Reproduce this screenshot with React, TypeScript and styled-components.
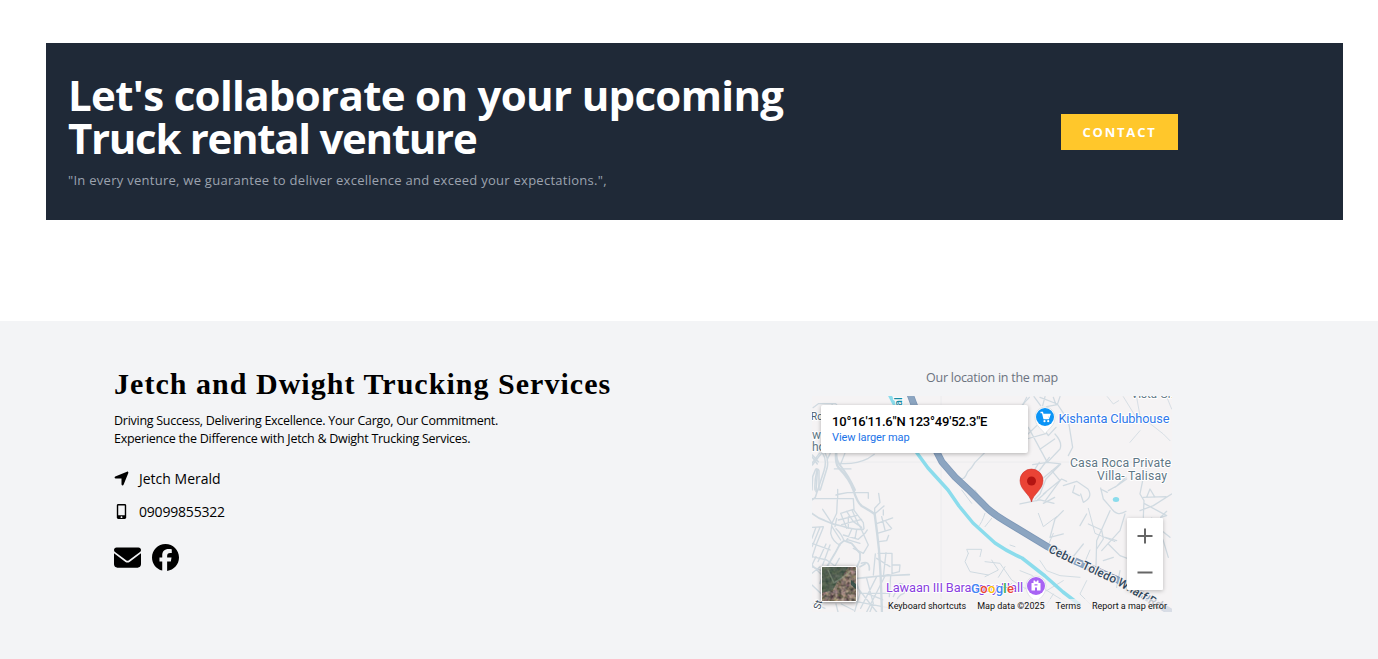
import React from "react";
import styled, { createGlobalStyle } from "styled-components";
import { FaEnvelope, FaFacebook, FaLocationArrow } from "react-icons/fa6";
import { FaMobileAlt } from "react-icons/fa";

const GlobalStyle = createGlobalStyle`
  * { box-sizing: border-box; }
  body {
    margin: 0;
    background: #fff;
    font-family: "Open Sans", "Noto Sans", sans-serif;
  }
  h2, p { margin: 0; font-weight: 400; }
`;

const Page = styled.div`
  width: 1378px;
  height: 659px;
  padding-top: 43px;
  overflow: hidden;
`;

const Banner = styled.section`
  display: flex;
  height: 177px;
  margin: 0 35px 101px 46px;
  padding: 30px 165px 0 22px;
  justify-content: space-between;
  background: #1f2937;
`;

const BannerTitle = styled.h2`
  color: #fff;
  font-size: 42px;
  line-height: 43px;
  font-weight: 700;
  white-space: nowrap;
`;

const TitleLine = styled.span<{ $spacing: number }>`
  display: block;
  letter-spacing: ${(p) => p.$spacing}px;
`;

const BannerText = styled.p`
  margin-top: 11px;
  color: #9ca3af;
  font-size: 13px;
  line-height: 20px;
  letter-spacing: 0.27px;
  white-space: nowrap;
`;

const ContactButton = styled.button`
  width: 117px;
  height: 36px;
  margin-top: 41px;
  padding: 0;
  border: 0;
  background: #ffc72b;
  color: #fff;
  font: 700 13px/36px "Open Sans", sans-serif;
  letter-spacing: 1.8px;
`;

const Footer = styled.footer`
  display: flex;
  height: 338px;
  padding: 46px 206px 0 114px;
  justify-content: space-between;
  background: #f3f4f6;
`;

const Company = styled.div`
  display: flex;
  flex-direction: column;
`;

const CompanyName = styled.h2`
  font: 700 30px/34px "Liberation Serif", serif;
  letter-spacing: 1.03px;
  white-space: nowrap;
`;

const Tagline = styled.p`
  margin-top: 11px;
  font-size: 12.5px;
  line-height: 18px;
  letter-spacing: -0.27px;
  white-space: nowrap;
`;

const ContactList = styled.div`
  display: flex;
  flex-direction: column;
  gap: 13px;
  margin-top: 20px;
`;

const ContactRow = styled.div`
  display: flex;
  align-items: center;
  height: 20px;
  font-size: 14px;
`;

const IconSlot = styled.span`
  display: flex;
  width: 14px;
  margin-right: 11px;
  justify-content: center;

  svg { flex: none; }
`;

const ContactLabel = styled.span<{ $spacing: number }>`
  letter-spacing: ${(p) => p.$spacing}px;
`;

const Socials = styled.div`
  display: flex;
  gap: 11px;
  margin-top: 23px;
`;

const Location = styled.div`
  display: flex;
  flex-direction: column;
  width: 360px;
  align-items: center;
`;

const LocationTitle = styled.p`
  height: 29px;
  color: #6b7280;
  font-size: 12.5px;
  line-height: 21px;
  letter-spacing: -0.27px;
`;

const MapFrame = styled.div`
  position: relative;
  width: 360px;
  height: 216px;
  overflow: hidden;
  background: #f5f3f4;
  font-family: Roboto, sans-serif;
`;

const MapDrawing = styled.svg`
  display: block;
`;

const InfoCard = styled.div`
  position: absolute;
  left: 9px;
  top: 9px;
  width: 207px;
  height: 48px;
  padding: 9px 11px;
  border-radius: 2px;
  background: #fff;
  box-shadow: 0 1px 4px rgba(0, 0, 0, 0.28);
  white-space: nowrap;
`;

const Coordinates = styled.div`
  color: #000;
  font-size: 13px;
  line-height: 15px;
  font-weight: 500;
  letter-spacing: -0.2px;
`;

const MapLink = styled.div`
  color: #1a73e8;
  font-size: 11px;
  line-height: 18px;
  letter-spacing: -0.1px;
`;

const ZoomControl = styled.div`
  position: absolute;
  right: 9px;
  top: 122px;
  width: 36px;
  height: 72px;
  border-radius: 1px;
  background: #fff;
  box-shadow: 0 1px 4px rgba(0, 0, 0, 0.25);
`;

const Satellite = styled.div`
  position: absolute;
  left: 9px;
  top: 170px;
  width: 36px;
  height: 36px;
  border: 1px solid #fff;
  border-radius: 2px;
  box-shadow: 0 1px 4px rgba(0, 0, 0, 0.5);
  overflow: hidden;
`;

const Attribution = styled.div`
  position: absolute;
  right: 0;
  bottom: 0;
  display: flex;
  height: 13px;
  padding: 0 5px;
  gap: 11px;
  background: rgba(245, 243, 244, 0.72);
  color: #111;
  font-size: 9px;
  line-height: 15px;
  white-space: nowrap;
`;

const Roads = () => (
  <g fill="none" stroke="#d0dae1" strokeLinejoin="round" strokeLinecap="round">
    <path d="M0 66H360M129 0V216" stroke="#ececee" strokeWidth="1" />
    <g transform="translate(-7 -31) scale(.3333)" strokeWidth="3.8">
      <path d="M24 128L40 116H92L102 128M80 116L86 128" />
      <path d="M60 264Q72 285 66 310L46 375M30 375Q28 350 36 314Q40 310 42 318V375M22 300L50 264M22 270L40 290M66 285L76 264" strokeWidth="4.5" />
      <path d="M94 264Q94 285 103 298Q130 330 150 375" strokeWidth="6" />
      <path d="M100 295Q150 300 190 280L208 268M88 312H138M106 300L120 264" />
      <path d="M470 340Q478 345 488 320Q500 310 510 292L538 264" />
    </g>
    <g transform="translate(-2 54) scale(.3333)" strokeWidth="4">
      <path d="M38 10Q52 30 42 62L16 142L6 150M6 120L8 80L16 60Q22 50 22 66L18 125M6 40L28 10M6 20L22 42" strokeWidth="4.500" />
      <path d="M78 10Q76 40 85 52Q120 88 130 120Q142 158 155 168Q180 182 194 192Q202 250 207 300L212 378L216 486" strokeWidth="7" />
      <path d="M6 190Q25 205 45 212Q70 224 95 228Q130 240 160 238" strokeWidth="5" />
      <path d="M6 146H130L132 178M78 135L90 132L112 128H175V145M83 118V145M38 178L66 220L62 250Q68 275 90 285M82 150L80 190L66 220" />
      <path d="M92 190L130 178L160 218L162 236M92 190L110 235M110 184L130 215M126 180L146 225M85 210L142 196M95 224L155 208M130 215L155 232M115 200V235M80 205L75 230" />
      <path d="M78 236Q95 252 102 272M66 230L92 270M100 255L145 268L165 250L172 240M148 225L175 285L160 310L130 295M125 238L110 272M140 240L135 265M110 268L150 280" />
      <path d="M102 272L90 282L75 310L45 360L30 400M102 272L125 280L150 310V330L130 375L135 390" strokeWidth="5.500" />
      <path d="M6 232L40 230M18 232L6 265M30 232L6 290M40 232L18 286L6 322M6 280L60 300M60 285L38 345M48 282L24 335M6 320L50 330L75 348L88 325M6 350L35 362M18 320L6 345" />
      <path d="M194 192V175L210 158L206 130M194 192L222 168M198 222L248 204M202 250L242 238M215 200L225 240M220 195V180M207 275L230 272L236 256M228 215L245 235" />
      <path d="M204 310H246V372M228 308L220 380M196 312L190 375M246 345H270L268 365L210 380M200 325L240 350" />
      <path d="M136 386L210 378L298 374M154 340Q180 330 178 360M150 350L165 342" strokeWidth="5" />
      <path d="M136 386L150 430L134 484M170 385L190 460L180 485M152 430H240M200 380L152 475M225 378L170 486M136 405L200 486M170 430L220 450M242 378L238 440M140 455L245 475M6 345L35 374M6 370L30 350M6 405L32 430M10 460L45 475M78 462L84 486M94 462L130 480M250 440L270 400Q290 400 282 430Q260 435 255 470" />
    </g>
    <g transform="translate(208 -2) scale(.3333)" strokeWidth="3.8">
      <path d="M20 10L0 50M42 8L62 35M60 10L112 30L145 80L158 160L145 185M75 8L68 35M100 10L108 32M120 8L112 32L80 38M108 100L85 125L62 90M25 100L82 205M82 205L120 165Q128 145 105 120M20 135L80 118M60 166L104 135M38 212L82 205L122 210L78 255L60 300L45 315M35 240L58 205M60 260L120 210M70 300L125 255L140 262M50 320L78 295" />
      <path d="M0 40L28 10M22 60L0 70M50 95L24 120M50 240L88 190M76 320L120 260L95 230M70 328L104 310M0 330L60 318L102 328" />
      <path d="M262 8L280 30L296 20M310 8L345 65L370 90M350 10L360 65L430 120L450 140M330 145L360 110M440 8L455 45" strokeWidth="2.500" />
      <path d="M130 275L170 262L204 285Q220 310 190 325L182 300M164 275L158 295L178 305" />
      <path d="M242 282L250 315L272 340Q290 370 318 352M265 290L290 276L318 250M242 285L262 295M285 280L320 255M370 250L360 300L372 320L370 370M370 310L438 308M372 328L440 365L422 370L440 352M360 350L400 335L455 300M380 310L390 285L405 310" />
      <path d="M130 350L105 375L90 430L130 420M270 350L230 440L228 520M205 390L245 408L250 435L230 465M315 360L300 410L245 470M265 450L300 485L340 500M250 500L280 490M180 395L200 360M150 500L190 450M395 372L430 440L445 490M400 390L450 430M300 530L290 580M195 520L250 550M255 430L290 440" />
      <path d="M60 500L80 530L120 545L180 550M0 530L38 545L65 580L130 620L170 640M40 550L15 585M80 590L130 560M100 600L75 640M200 560L180 600L220 640" strokeWidth="2.800" />
    </g>
    <g transform="translate(173 94) scale(.3333)" strokeWidth="3">
      <path d="M0 215L45 220L80 270L120 295M20 210L40 240L0 260M60 230L40 262M75 165L90 170M80 280L55 310M0 70Q-10 100 -20 110M20 85L0 110M-70 0L-40 40M-30 0L10 60" />
      <path d="M-50 190L-55 178H-10L-15 200M-50 190L-60 215L-45 245L10 255" />
      <path d="M160 70L175 110L215 80M190 165L205 130M310 55L330 130L390 155M240 200L300 215L315 180" />
    </g>
  </g>
);

const MapLabels = () => (
  <g fontFamily="Roboto, sans-serif" stroke="#fff" strokeWidth="2" strokeLinejoin="round" paintOrder="stroke">
    <text x="246.500" y="27" fontSize="12.8" fill="#2f78ea" textLength="111">Kishanta Clubhouse</text>
    <g fontSize="12.300" fill="#5f7886">
      <text x="258" y="71" textLength="101">Casa Roca Private</text>
      <text x="285" y="84" textLength="70">Villa- Talisay</text>
      <text x="319" y="2" fontSize="11.500">Vista Gr.</text>
      <text x="0" y="43" fontSize="12">w</text>
      <text x="0" y="55" fontSize="12">ho</text>
    </g>
    <text x="-1" y="24" fontSize="10" fill="#4b6070">Ro</text>
    <text transform="translate(90 10) rotate(-90)" fontSize="11" fill="#168ba5" fontWeight="500">al</text>
    <text transform="translate(8 214) rotate(-75)" fontSize="10" fill="#3f5060">St.</text>
    <text x="74" y="196" fontSize="12.8" fill="#8a3fe0" textLength="137">Lawaan III Barangay Hall</text>
  </g>
);

const LocationMap = () => (
  <MapDrawing width="360" height="216" viewBox="0 0 360 216">
    <defs>
      <path id="wharf" d="M237 153L265 167L306 186L354 214" />
    </defs>
    <Roads />
    <ellipse cx="304" cy="103.500" rx="3.200" ry="2.500" fill="#8bdcec" />
    <g fill="none" strokeLinejoin="round">
      <path d="M77 -2Q87 16 93 35L105 57L116 72L136 94L147 110L161 127L183 147Q196 156 210 162L233 180L251 196L268 209" stroke="#8bdcec" strokeWidth="3.500" />
      <path d="M98 -2Q104 15 114 36Q123 52 130 66L143 81L158 95L171 108Q178 116 193 125L236 151L263 165L306 184L362 218" stroke="#7d97b7" strokeWidth="7" />
      <path d="M98 -2Q104 15 114 36Q123 52 130 66L143 81L158 95L171 108Q178 116 193 125L236 151L263 165L306 184L362 218" stroke="#8ca5c1" strokeWidth="5.500" />
    </g>
    <text fontFamily="Roboto, sans-serif" fontSize="12" fill="#344a60" stroke="#f5f3f4" strokeWidth="2.500" paintOrder="stroke" fontWeight="500" dy="3">
      <textPath href="#wharf">Cebu - Toledo Wharf Rd</textPath>
    </text>
    <MapLabels />
    <g>
      <path d="M233 38C230 33 223 30 223 21A10 10 0 0 1 243 21C243 30 236 33 233 38Z" fill="#fff" stroke="#c9ced3" strokeWidth=".5" />
      <circle cx="233" cy="21" r="9" fill="#0b94f6" />
      <path d="M228.500 16.500H230.500L232 22.700H236.500L238 18.500H231" fill="none" stroke="#fff" strokeWidth="1.300" />
      <path d="M231 18.500H237.500L236 22.500H232Z" fill="#fff" />
      <circle cx="232.500" cy="25.200" r="1.100" fill="#fff" /><circle cx="236.200" cy="25.200" r="1.100" fill="#fff" />
    </g>
    <g>
      <path d="M224 207C222 203 214 200 214 190A10 10 0 0 1 234 190C234 200 226 203 224 207Z" fill="#fff" stroke="#c9ced3" strokeWidth=".5" />
      <circle cx="224" cy="190" r="9" fill="#a863f4" />
      <path fillRule="evenodd" d="M219.500 187H221.500V184.500H223V185.500H225V184.500H226.500V187H228.500V194.500H219.500ZM223 194.500H225V191.500H223ZM222.500 188.300H225.500V189.500H222.500Z" fill="#fff" />
    </g>
    <path d="M219.500 106C218 98 208 94 208 84.500A11.500 11.500 0 0 1 231 84.500C231 94 221 98 219.500 106Z" fill="#ea4335" stroke="#c5221f" strokeWidth=".5" />
    <circle cx="219.500" cy="85" r="4.500" fill="#b31412" />
    <text x="159" y="197" fontFamily="Roboto, sans-serif" fontSize="13" fontWeight="500" stroke="#fff" strokeWidth="1.500" paintOrder="stroke" textLength="43">
      <tspan fill="#4285f4">G</tspan><tspan fill="#ea4335">o</tspan><tspan fill="#fbbc04">o</tspan><tspan fill="#4285f4">g</tspan><tspan fill="#34a853">l</tspan><tspan fill="#ea4335">e</tspan>
    </text>
  </MapDrawing>
);

const SatelliteView = () => (
  <svg width="34" height="34" viewBox="0 0 34 34">
    <defs>
      <filter id="ground" x="0" y="0" width="100%" height="100%" colorInterpolationFilters="sRGB">
        <feTurbulence type="fractalNoise" baseFrequency=".25" numOctaves="4" seed="8" />
        <feColorMatrix values="0.7 0 0 0 0.16  0.55 0.15 0 0 0.1  0.5 0 0.15 0 0.08  0 0 0 0 1" />
      </filter>
    </defs>
    <rect width="34" height="34" fill="#75695e" />
    <rect width="34" height="34" filter="url(#ground)" />
    <path d="M0 0H26L19 12L15 15L11 23L0 26Z" fill="#31513f" opacity=".6" />
    <path d="M6 3L12 16L20 11L29 4" fill="none" stroke="#8b9b86" strokeWidth="1.500" opacity=".5" />
    <path d="M29 13L34 17V22L29 18Z" fill="#24463d" opacity=".8" />
  </svg>
);

export default function App() {
  return (
    <>
      <GlobalStyle />
      <Page>
        <Banner>
          <div>
            <BannerTitle>
              <TitleLine $spacing={-0.68}>Let's collaborate on your upcoming</TitleLine>
              <TitleLine $spacing={-1.3}>Truck rental venture</TitleLine>
            </BannerTitle>
            <BannerText>"In every venture, we guarantee to deliver excellence and exceed your expectations.",</BannerText>
          </div>
          <ContactButton>CONTACT</ContactButton>
        </Banner>
        <Footer>
          <Company>
            <CompanyName>Jetch and Dwight Trucking Services</CompanyName>
            <Tagline>
              Driving Success, Delivering Excellence. Your Cargo, Our Commitment.<br />
              Experience the Difference with Jetch &amp; Dwight Trucking Services.
            </Tagline>
            <ContactList>
              <ContactRow>
                <IconSlot><FaLocationArrow size={17} /></IconSlot>
                <ContactLabel $spacing={0}>Jetch Merald</ContactLabel>
              </ContactRow>
              <ContactRow>
                <IconSlot><FaMobileAlt size={15} /></IconSlot>
                <ContactLabel $spacing={-0.2}>09099855322</ContactLabel>
              </ContactRow>
            </ContactList>
            <Socials>
              <FaEnvelope size={27} />
              <FaFacebook size={27} />
            </Socials>
          </Company>
          <Location>
            <LocationTitle>Our location in the map</LocationTitle>
            <MapFrame>
              <LocationMap />
              <InfoCard>
                <Coordinates>10°16'11.6"N 123°49'52.3"E</Coordinates>
                <MapLink>View larger map</MapLink>
              </InfoCard>
              <ZoomControl>
                <svg width="36" height="72" viewBox="0 0 36 72" fill="none" stroke="#666" strokeWidth="2">
                  <path d="M10.500 18H25.500M18 10.500V25.500M10.500 54.500H25.500" />
                </svg>
              </ZoomControl>
              <Satellite><SatelliteView /></Satellite>
              <Attribution>
                <span>Keyboard shortcuts</span>
                <span>Map data ©2025</span>
                <span>Terms</span>
                <span>Report a map error</span>
              </Attribution>
            </MapFrame>
          </Location>
        </Footer>
      </Page>
    </>
  );
}
